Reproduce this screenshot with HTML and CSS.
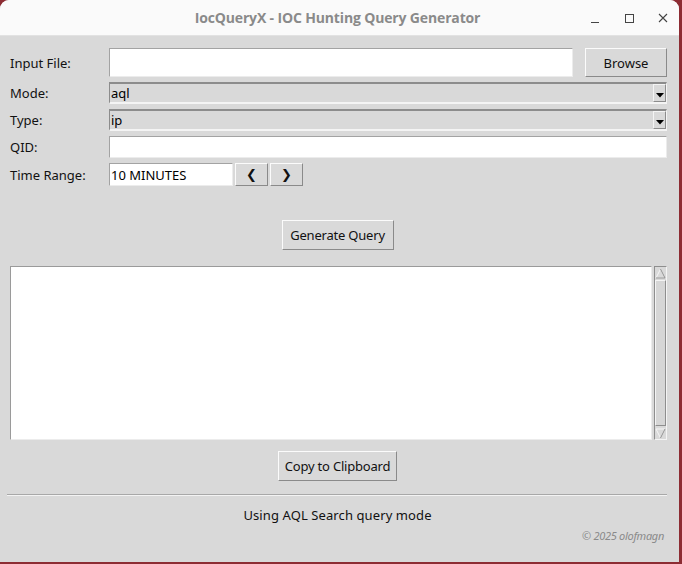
FILE: index.html
```html
<!DOCTYPE html>
<html>
<head>
<meta charset="utf-8">
<link rel="stylesheet" href="styles.css">
</head>
<body>
<div class="window">
  <div class="titlebar">
    <div class="title">IocQueryX - IOC Hunting Query Generator</div>
    <div class="controls">
      <svg class="ctl" width="12" height="12" viewBox="0 0 12 12"><line x1="2" y1="10.5" x2="10" y2="10.5" stroke="#444" stroke-width="1"/></svg>
      <svg class="ctl" width="12" height="12" viewBox="0 0 12 12"><rect x="2.5" y="2.5" width="8" height="8" fill="none" stroke="#444" stroke-width="1"/></svg>
      <svg class="ctl" width="12" height="12" viewBox="0 0 12 12"><path d="M2 2 L10 10 M10 2 L2 10" stroke="#444" stroke-width="1.1"/></svg>
    </div>
  </div>
  <div class="content">
    <div class="form">
      <div class="row row-file">
        <label class="lbl">Input File:</label>
        <div class="entry grow"></div>
        <div class="btn browse">Browse</div>
      </div>
      <div class="row row-combo">
        <label class="lbl">Mode:</label>
        <div class="combo grow"><span class="val">aql</span><span class="arrow"><svg width="8" height="5" viewBox="0 0 8 5"><path d="M0 0 H8 L4 4.5 Z" fill="#000"/></svg></span></div>
      </div>
      <div class="row row-combo">
        <label class="lbl">Type:</label>
        <div class="combo grow"><span class="val">ip</span><span class="arrow"><svg width="8" height="5" viewBox="0 0 8 5"><path d="M0 0 H8 L4 4.5 Z" fill="#000"/></svg></span></div>
      </div>
      <div class="row row-combo">
        <label class="lbl">QID:</label>
        <div class="entry grow"></div>
      </div>
      <div class="row row-time">
        <label class="lbl">Time Range:</label>
        <div class="entry time"><span class="val">10 MINUTES</span></div>
        <div class="btn arrowbtn">&#10094;</div>
        <div class="btn arrowbtn">&#10095;</div>
      </div>
    </div>
    <div class="center gen-wrap"><div class="btn action gen">Generate Query</div></div>
    <div class="textarea-wrap">
      <div class="textarea"></div>
      <div class="scrollbar">
        <div class="sb-arrow"><svg width="11" height="11" viewBox="0 0 11 11"><path d="M1 10 L5.5 1 L10 10 Z" fill="#d9d9d9" stroke="#f6f6f6" stroke-width="1"/><path d="M5.5 1 L10 10 H1" fill="none" stroke="#8e8e8e" stroke-width="1"/></svg></div>
        <div class="sb-track"></div>
        <div class="sb-arrow"><svg width="11" height="11" viewBox="0 0 11 11"><path d="M1 1 H10 L5.5 10 Z" fill="#d9d9d9" stroke="#f6f6f6" stroke-width="1"/><path d="M10 1 L5.5 10" fill="none" stroke="#8e8e8e" stroke-width="1"/></svg></div>
      </div>
    </div>
    <div class="center copy-wrap"><div class="btn action copy">Copy to Clipboard</div></div>
    <div class="sep"></div>
    <div class="status">Using AQL Search query mode</div>
    <div class="copyright">© 2025 olofmagn</div>
  </div>
</div>
</body>
</html>
```
FILE: styles.css
```css
html, body {
  margin: 0;
  padding: 0;
}
body {
  width: 682px;
  height: 564px;
  background: #8d2c33;
  overflow: hidden;
  font-family: "Noto Sans", "Open Sans", sans-serif;
}
.window {
  width: 679px;
  height: 562px;
  background: #d9d9d9;
  border-top-left-radius: 9px;
  border-top-right-radius: 9px;
  overflow: hidden;
  display: flex;
  flex-direction: column;
}
.titlebar {
  height: 35px;
  background: #fafafa;
  border-bottom: 1px solid #e2e2e2;
  position: relative;
  display: flex;
  align-items: center;
  justify-content: center;
  flex-shrink: 0;
}
.title {
  font-family: "Open Sans", "DejaVu Sans", sans-serif;
  font-weight: 700;
  font-size: 14px;
  color: #8a8a8a;
  letter-spacing: -0.15px;
  margin-left: -4px;
}
.controls {
  position: absolute;
  right: 10px;
  top: 12px;
  display: flex;
  gap: 22px;
}
.ctl { display: block; }
.content {
  padding: 12px 12px 0 0;
  display: flex;
  flex-direction: column;
}
.form {
  display: flex;
  flex-direction: column;
  gap: 5px;
}
.row {
  display: flex;
  align-items: stretch;
}
.lbl {
  width: 99px;
  padding-left: 10px;
  font-size: 13px;
  color: #111;
  display: flex;
  align-items: center;
  flex-shrink: 0;
}
.grow { flex: 1; }
.row-file { height: 29px; }
.row-combo { height: 22px; }
.row-time { height: 23px; }
.entry {
  background: #fff;
  border-top: 1px solid #a3a3a3;
  border-left: 1px solid #a3a3a3;
  border-bottom: 1px solid #ececec;
  border-right: 1px solid #ececec;
  box-sizing: border-box;
  display: flex;
  align-items: center;
}
.row-file .entry { margin-right: 12px; }
.val {
  font-size: 13px;
  color: #000;
  padding-left: 1px;
}
.combo {
  background: #d9d9d9;
  border-top: 2px solid #8c8c8c;
  border-left: 1px solid #8c8c8c;
  border-bottom: 2px solid #f4f4f4;
  border-right: 1px solid #f4f4f4;
  box-sizing: border-box;
  display: flex;
  align-items: center;
  justify-content: space-between;
}
.arrow {
  width: 13px;
  align-self: stretch;
  box-sizing: border-box;
  border-top: 1px solid #f4f4f4;
  border-left: 1px solid #f4f4f4;
  border-right: 1px solid #8c8c8c;
  border-bottom: 1px solid #8c8c8c;
  display: flex;
  align-items: flex-end;
  justify-content: center;
  padding-bottom: 3px;
}
.arrow svg { display: block; }
.btn {
  background: #d9d9d9;
  border-top: 1px solid #fbfbfb;
  border-left: 1px solid #fbfbfb;
  border-right: 1px solid #8a8a8a;
  border-bottom: 1px solid #8a8a8a;
  box-sizing: border-box;
  font-size: 13px;
  color: #111;
  display: flex;
  align-items: center;
  justify-content: center;
}
.browse { width: 82px; }
.time {
  width: 124px;
}
.arrowbtn {
  width: 33px;
  margin-left: 2px;
  font-size: 13px;
  font-weight: bold;
  font-family: "DejaVu Sans", sans-serif;
}
.center {
  display: flex;
  justify-content: center;
  padding-left: 8px;
}
.gen-wrap { margin-top: 34px; }
.action {
  height: 30px;
  padding: 0 5px;
  letter-spacing: -0.2px;
}
.gen { width: 112px; }
.copy { width: 119px; }
.textarea-wrap {
  margin-top: 16px;
  margin-left: 10px;
  height: 174px;
  display: flex;
}
.textarea {
  flex: 1;
  background: #fff;
  border-top: 1px solid #9a9a9a;
  border-left: 1px solid #9a9a9a;
  border-bottom: 1px solid #ececec;
  border-right: 1px solid #ececec;
  box-sizing: border-box;
}
.scrollbar {
  width: 13px;
  margin-left: 2px;
  background: #d9d9d9;
  border-top: 1px solid #8e8e8e;
  border-left: 1px solid #8e8e8e;
  border-right: 1px solid #f4f4f4;
  border-bottom: 1px solid #f4f4f4;
  box-sizing: border-box;
  display: flex;
  flex-direction: column;
}
.sb-arrow {
  height: 12px;
  background: #d9d9d9;
  display: flex;
  align-items: center;
  justify-content: center;
}
.sb-arrow svg { display: block; }
.sb-track {
  flex: 1;
  background: #d6d6d6;
  border-top: 1px solid #f4f4f4;
  border-left: 1px solid #f4f4f4;
  border-bottom: 1px solid #8e8e8e;
  border-right: 1px solid #8e8e8e;
  margin: 1px 0;
}
.copy-wrap { margin-top: 11px; }
.sep {
  margin: 13px 0 0 7px;
  height: 1px;
  background: #a8a8a8;
  border-bottom: 1px solid #f3f3f3;
}
.status {
  margin-top: 10px;
  text-align: center;
  padding-left: 8px;
  font-size: 13px;
  color: #111;
  letter-spacing: 0.1px;
}
.copyright {
  text-align: right;
  margin-top: 4px;
  padding-right: 3px;
  font-size: 11px;
  font-style: italic;
  color: #8a8a8a;
  letter-spacing: -0.3px;
}
```
